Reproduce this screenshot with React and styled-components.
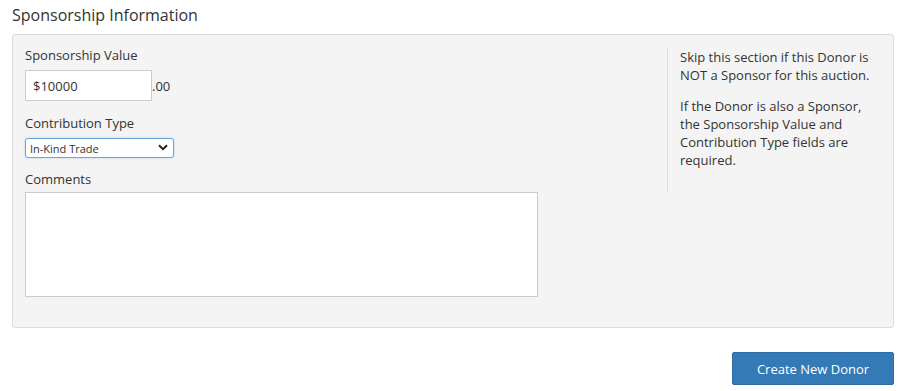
import styled, { createGlobalStyle } from 'styled-components';

const GlobalStyle = createGlobalStyle`
	body {
		margin: 0;
		background: #fff;
		font-family: 'Open Sans', 'Liberation Sans', sans-serif;
		color: #333;
	}
`;

const Page = styled.div`
	width: 907px;
	padding: 4px 13px 0 12px;
	box-sizing: border-box;
`;
const Title = styled.h3`
	margin: 0 0 8px;
	font-size: 16px;
	line-height: 22px;
	font-weight: 400;
	color: #333;
`;
const Panel = styled.div`
	background: #f4f4f4;
	border: 1px solid #dcdcdc;
	border-radius: 3px;
	padding: 11px 12px 29px;
	display: flex;
	height: 294px;
	box-sizing: border-box;
`;
const Fields = styled.div`
	flex: 1;
`;
const Label = styled.label`
	display: block;
	font-size: 13px;
	line-height: 18px;
	margin-bottom: ${(p) => p.$gap || 6}px;
`;
const Field = styled.div`
	margin-bottom: ${(p) => p.$space || 13}px;
`;
const MoneyRow = styled.div`
	display: flex;
	align-items: center;
	font-size: 13px;
`;
const Input = styled.input`
	width: 127px;
	height: 31px;
	box-sizing: border-box;
	border: 1px solid #ccc;
	background: #fff;
	padding: 0 7px;
	font: inherit;
	font-size: 13px;
	color: #333;
	outline: none;
`;
const SelectWrap = styled.div`
	position: relative;
	width: 149px;
	height: 20px;

	svg {
		position: absolute;
		right: 6px;
		top: 6px;
		pointer-events: none;
	}
`;
const Select = styled.select`
	display: block;
	width: 100%;
	height: 100%;
	box-sizing: border-box;
	appearance: none;
	border: 1px solid #6aa6e0;
	border-radius: 3px;
	box-shadow: 0 0 2px rgba(102, 175, 233, 0.6);
	background: #fff;
	font-family: 'Open Sans', 'Liberation Sans', sans-serif;
	font-size: 11px;
	color: #333;
	padding: 0 4px;
	outline: none;
`;
const TextArea = styled.textarea`
	display: block;
	width: 513px;
	height: 105px;
	box-sizing: border-box;
	border: 1px solid #ccc;
	background: #fff;
	resize: none;
	outline: none;
`;
const Aside = styled.div`
	width: 214px;
	flex-shrink: 0;
	border-left: 1px solid #ddd;
	margin-top: 1px;
	padding: 1px 0 0 12px;
	height: 145px;
	box-sizing: border-box;
	font-size: 13px;
	line-height: 18px;

	p {
		margin: 0 0 13px;
	}
`;
const Actions = styled.div`
	display: flex;
	justify-content: flex-end;
	margin-top: 24px;
`;
const Button = styled.button`
	width: 162px;
	height: 33px;
	background: #337ab7;
	border: 1px solid #2e6da4;
	border-radius: 2px;
	color: #fff;
	font-family: 'Open Sans', 'Liberation Sans', sans-serif;
	font-size: 13px;
`;

const Chevron = () => (
	<svg width='10' height='7' viewBox='0 0 10 7'>
		<path d='M1 1.2 L5 5.2 L9 1.2' fill='none' stroke='#222' strokeWidth='2' />
	</svg>
);

const App = () => (
	<Page>
		<GlobalStyle />
		<Title>Sponsorship Information</Title>
		<Panel>
			<Fields>
				<Field>
					<Label>Sponsorship Value</Label>
					<MoneyRow>
						<Input defaultValue='$10000' />
						<span>.00</span>
					</MoneyRow>
				</Field>
				<Field $space={12}>
					<Label>Contribution Type</Label>
					<SelectWrap>
						<Select defaultValue='trade'>
							<option value='trade'>In-Kind Trade</option>
							<option value='cash'>Cash</option>
						</Select>
						<Chevron />
					</SelectWrap>
				</Field>
				<Label $gap={4}>Comments</Label>
				<TextArea />
			</Fields>
			<Aside>
				<p>Skip this section if this Donor is NOT a Sponsor for this auction.</p>
				<p>
					If the Donor is also a Sponsor, the Sponsorship Value and
					Contribution Type fields are required.
				</p>
			</Aside>
		</Panel>
		<Actions>
			<Button>Create New Donor</Button>
		</Actions>
	</Page>
);

export default App;
